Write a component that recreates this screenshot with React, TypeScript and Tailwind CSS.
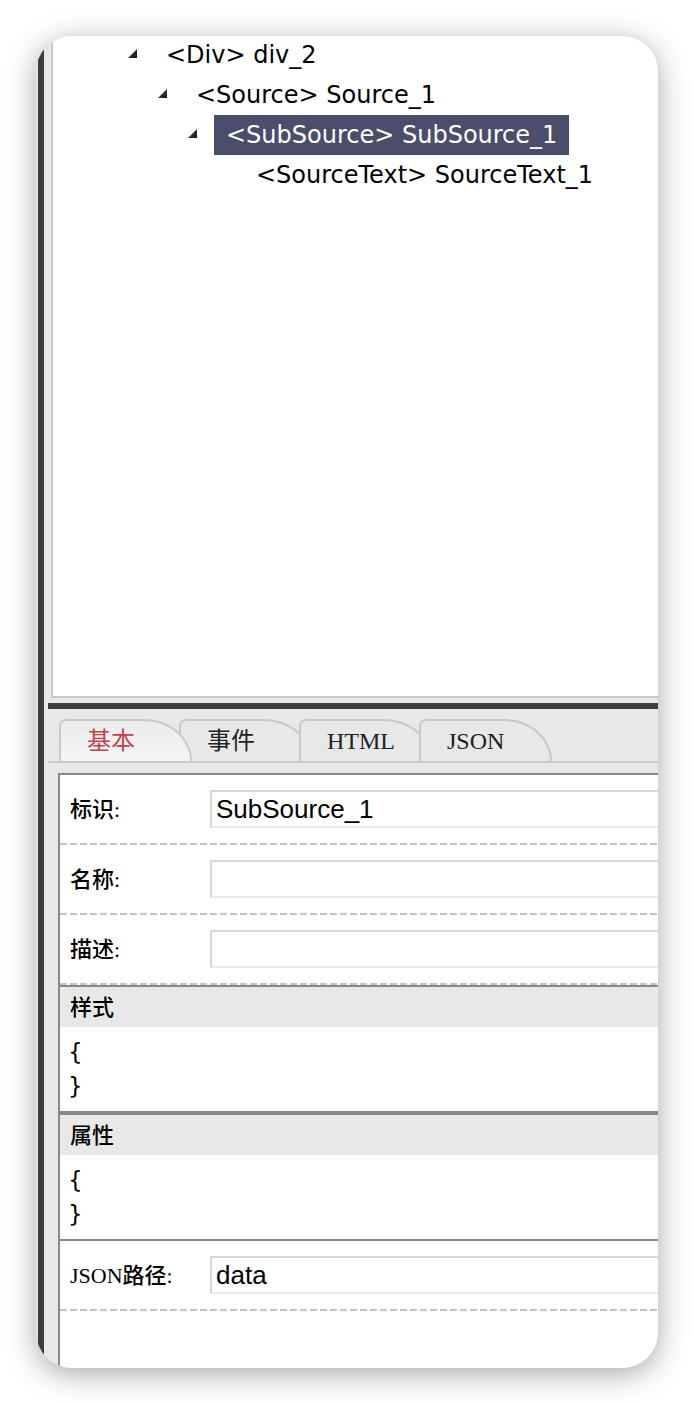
import React from "react";

const cjkSerif = { fontFamily: '"Liberation Serif", "Noto Sans CJK SC", serif' };
const treeFont = { fontFamily: '"DejaVu Sans", Verdana, sans-serif' };

function Tri() {
  return (
    <svg width="9" height="9" viewBox="0 0 9 9" className="shrink-0 mt-[-4px]">
      <defs>
        <linearGradient id="tg" x1="0" y1="0" x2="1" y2="1">
          <stop offset="0" stopColor="#555" />
          <stop offset="1" stopColor="#111" />
        </linearGradient>
      </defs>
      <polygon points="9,0 9,9 0,9" fill="url(#tg)" />
    </svg>
  );
}

type Node = { level: number; tag: string; name: string; open: boolean; selected?: boolean };

const nodes: Node[] = [
  { level: 0, tag: "<Div>", name: "div_2", open: true },
  { level: 1, tag: "<Source>", name: "Source_1", open: true },
  { level: 2, tag: "<SubSource>", name: "SubSource_1", open: true, selected: true },
  { level: 3, tag: "<SourceText>", name: "SourceText_1", open: false },
];

const pads = ["pl-[75px]", "pl-[105px]", "pl-[135px]", "pl-[165px]"];

function TreeRow({ n }: { n: Node }) {
  return (
    <div className={`flex items-center h-[40px] ${pads[n.level]}`}>
      {n.open ? <Tri /> : <div className="w-[9px] shrink-0" />}
      <div className="w-[17px] shrink-0" />
      <div
        className={`h-[40px] px-[12px] flex items-center text-[24px] whitespace-nowrap ${
          n.selected ? "bg-[#4b4e6b] text-white" : "text-black"
        }`}
        style={treeFont}
      >
        {n.tag} {n.name}
      </div>
    </div>
  );
}

const tabs = [
  { label: "基本", active: true, cls: "z-20" },
  { label: "事件", active: false, cls: "z-[1] ml-[-13px]" },
  { label: "HTML", active: false, cls: "z-[2] ml-[-13px]" },
  { label: "JSON", active: false, cls: "z-[3] ml-[-13px]" },
];

function Dashed() {
  return (
    <div className="h-[2px] bg-[repeating-linear-gradient(90deg,#c2c2c2_0px,#c2c2c2_7px,transparent_7px,transparent_10px)]" />
  );
}

function Field({ label, value }: { label: string; value: string }) {
  return (
    <>
      <div className="flex items-center h-[68px] pl-[10px]">
        <div className="w-[140px] shrink-0 text-[22px] font-medium text-black" style={cjkSerif}>
          {label}
        </div>
        <div
          className="flex-1 h-[38px] border-2 border-[#d6d6d6] border-b-[#ebebeb] pl-[4px] text-[26px] leading-[34px] text-black"
          style={{ fontFamily: '"Liberation Sans", Arial, sans-serif' }}
        >
          {value}
        </div>
      </div>
      <Dashed />
    </>
  );
}

function Section({ title }: { title: string }) {
  return (
    <div className="border-t-2 border-b-2 border-[#888888]">
      <div className="h-[40px] bg-[#e8e8e8] flex items-center pl-[10px] text-[22px] font-medium text-black" style={cjkSerif}>
        {title}
      </div>
      <div className="bg-white py-[8px] pl-[8px] text-[23px] leading-[34px] text-black" style={treeFont}>
        <div>{"{"}</div>
        <div>{"}"}</div>
      </div>
    </div>
  );
}

export default function App() {
  return (
    <div className="w-[694px] h-[1404px] bg-white p-[36px]">
      <div className="w-[622px] h-[1332px] rounded-[36px] overflow-hidden bg-[#e8e8e8] shadow-[0_6px_30px_rgba(0,0,0,0.35)] flex">
        <div className="w-[2px] shrink-0 bg-[#e4e4e4]" />
        <div className="w-[6px] shrink-0 bg-[#3d3d3d]" />
        <div className="w-[720px] shrink-0 flex flex-col">
          {/* tree panel */}
          <div className="ml-[7px] h-[662px] shrink-0 bg-white border-l-2 border-b-2 border-[#c8c8c8] overflow-hidden">
            <div className="mt-[-1px]">
              {nodes.map((n, i) => (
                <TreeRow key={i} n={n} />
              ))}
            </div>
          </div>
          <div className="h-[5px] shrink-0" />
          {/* bottom panel */}
          <div className="ml-[4px] flex-1 border-t-[6px] border-[#3d3d3d] bg-[#e8e8e8] flex flex-col">
            <div className="pt-[10px] pl-[11px] flex border-b-2 border-[#c8c8c8]">
              {tabs.map((t) => (
                <div
                  key={t.label}
                  className={`relative w-[133px] h-[42px] shrink-0 border-t-2 border-l-2 border-r-2 border-[#c8c8c8] rounded-tl-[7px] rounded-tr-[48px_42px] pl-[26px] text-[24px] leading-[40px] ${
                    t.active ? "bg-linear-to-b from-[#ececec] to-[#f5f5f5] text-[#c0444a]" : "bg-[#e8e8e8] text-[#222]"
                  } ${t.cls}`}
                  style={cjkSerif}
                >
                  {t.label}
                </div>
              ))}
            </div>
            <div className="mt-[10px] ml-[10px] flex-1 border-t-2 border-l-2 border-[#888888] bg-white">
              <Field label="标识:" value="SubSource_1" />
              <Field label="名称:" value="" />
              <Field label="描述:" value="" />
              <Section title="样式" />
              <Section title="属性" />
              <Field label="JSON路径:" value="data" />
            </div>
          </div>
        </div>
      </div>
    </div>
  );
}
